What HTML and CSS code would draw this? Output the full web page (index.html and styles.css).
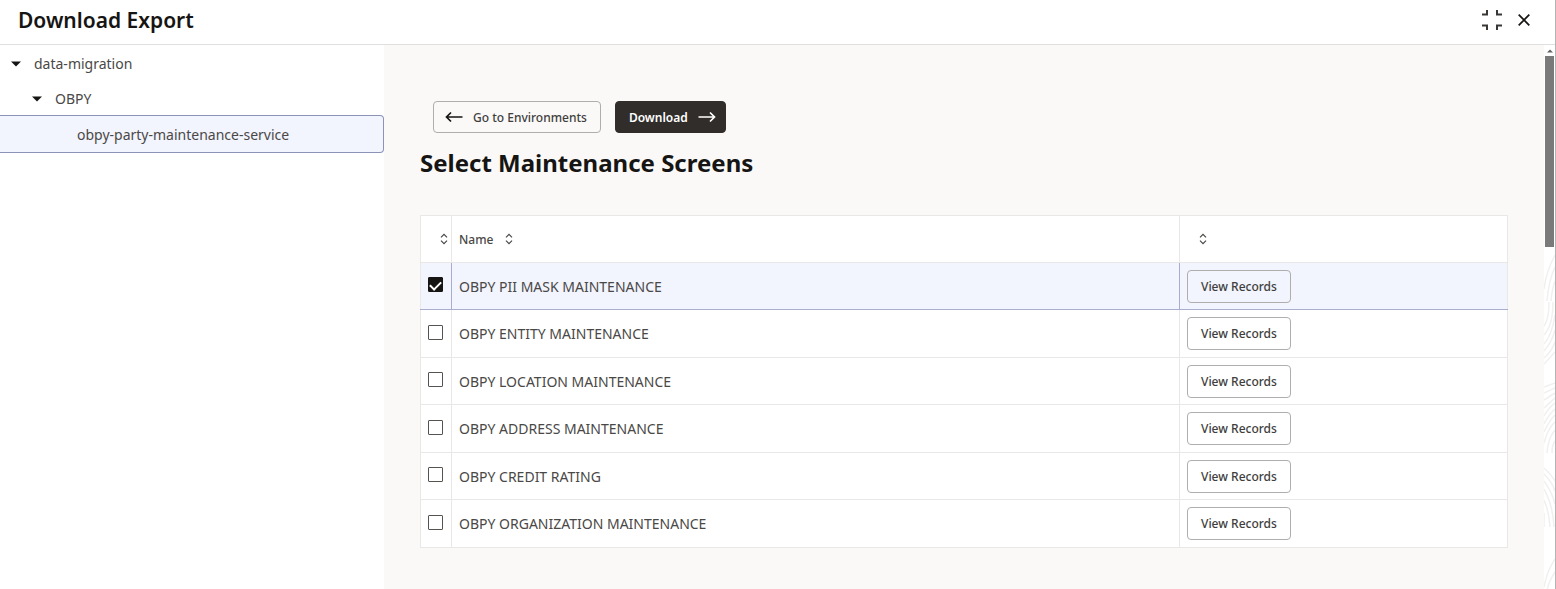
FILE: index.html
```html
<!DOCTYPE html>
<html lang="en">
<head>
<meta charset="utf-8">
<title>Download Export</title>
<link rel="stylesheet" href="styles.css">
</head>
<body>
<svg class="defs" aria-hidden="true">
  <symbol id="sort" viewBox="0 0 8 12"><path d="M1 4.3 4 1.3 7 4.3M1 7.7 4 10.7 7 7.7" fill="none" stroke="currentColor" stroke-width="1.2"/></symbol>
  <symbol id="caret" viewBox="0 0 10 6"><path d="M0 .5H10L5 5.500Z" fill="currentColor"/></symbol>
</svg>
<div class="dialog">
  <header class="topbar">
    <h1 class="title">Download Export</h1>
    <div class="window-tools">
      <button class="icon-button" type="button" aria-label="Collapse">
        <svg width="20" height="20" viewBox="0 0 20 20"><path d="M0 4.500H5V0M15 0V4.500H20M0 15.500H5V20M15 20V15.500H20" fill="none" stroke="#3a3836" stroke-width="2"/></svg>
      </button>
      <button class="icon-button" type="button" aria-label="Close">
        <svg width="12" height="12" viewBox="0 0 12 12"><path d="M.7.7 11.300 11.300M11.300.7.7 11.300" fill="none" stroke="currentColor" stroke-width="1.700"/></svg>
      </button>
    </div>
  </header>
  <div class="body">
    <nav class="tree">
      <button class="node" type="button"><svg class="caret"><use href="#caret"/></svg>data-migration</button>
      <button class="node level-2" type="button"><svg class="caret"><use href="#caret"/></svg>OBPY</button>
      <button class="node level-3 selected" type="button">obpy-party-maintenance-service</button>
    </nav>
    <main class="content">
      <div class="actions">
        <button class="button" type="button"><svg class="arrow" viewBox="0 0 18 12"><path d="M17.500 6H1.500M6 1.500 1.500 6 6 10.500" fill="none" stroke="currentColor" stroke-width="1.700"/></svg>Go to Environments</button>
        <button class="button primary" type="button">Download<svg class="arrow" viewBox="0 0 18 12"><path d="M.5 6H16.500M12 1.500 16.500 6 12 10.500" fill="none" stroke="currentColor" stroke-width="1.700"/></svg></button>
      </div>
      <h2 class="heading">Select Maintenance Screens</h2>
      <table class="grid">
        <colgroup><col class="col-check"><col><col class="col-action"></colgroup>
        <thead>
          <tr>
            <th class="check"><button class="sort" type="button" aria-label="Sort by selection"><svg><use href="#sort"/></svg></button></th>
            <th><button class="sort" type="button">Name<svg><use href="#sort"/></svg></button></th>
            <th class="action-head"><button class="sort" type="button" aria-label="Sort by action"><svg><use href="#sort"/></svg></button></th>
          </tr>
        </thead>
        <tbody>
          <tr class="selected"><td class="check"><input type="checkbox" id="r1" checked></td><td><label for="r1">OBPY PII MASK MAINTENANCE</label></td><td><button class="button" type="button">View Records</button></td></tr>
          <tr><td class="check"><input type="checkbox" id="r2"></td><td><label for="r2">OBPY ENTITY MAINTENANCE</label></td><td><button class="button" type="button">View Records</button></td></tr>
          <tr><td class="check"><input type="checkbox" id="r3"></td><td><label for="r3">OBPY LOCATION MAINTENANCE</label></td><td><button class="button" type="button">View Records</button></td></tr>
          <tr><td class="check"><input type="checkbox" id="r4"></td><td><label for="r4">OBPY ADDRESS MAINTENANCE</label></td><td><button class="button" type="button">View Records</button></td></tr>
          <tr><td class="check"><input type="checkbox" id="r5"></td><td><label for="r5">OBPY CREDIT RATING</label></td><td><button class="button" type="button">View Records</button></td></tr>
          <tr><td class="check"><input type="checkbox" id="r6"></td><td><label for="r6">OBPY ORGANIZATION MAINTENANCE</label></td><td><button class="button" type="button">View Records</button></td></tr>
        </tbody>
      </table>
    </main>
    <div class="scrollbar" aria-hidden="true">
      <svg class="scroll-up" viewBox="0 0 6 4"><path d="M0 3.500 3 .5 6 3.500Z" fill="#606060"/></svg>
      <div class="thumb"></div>
      <svg class="texture" viewBox="0 0 11 343" preserveAspectRatio="xMinYMin slice">
        <g fill="none" stroke="#f1f0ef" stroke-width="1.500">
          <path d="M11 8Q2 25 0 42M11 20Q5 32 3 54M11 34Q8 42 7 54"/>
          <path d="M5 55Q5 73 0 79M9 55Q9 78 0 88M11 68Q8 88 0 97M11 83Q8 95 0 104M11 95Q8 104 0 111M11 105 0 117"/>
          <path d="M0 140 11 136M0 146 11 141M0 153 11 146M0 161 11 151M0 169Q5 160 11 156M0 177Q5 167 11 162M0 185Q5 174 11 168M0 196Q4 181 11 175M3 206Q4 191 11 183M8 206Q8 198 11 194"/>
          <path d="M0 221Q7 227 11 234M0 227Q8 235 11 244M0 234Q8 245 11 257M0 242Q9 258 10 280M0 253Q5 264 6 280M0 266V280"/>
          <path d="M11 312Q3 324 0 340M11 325Q5 334 3 343"/>
        </g>
      </svg>
    </div>
  </div>
</div>
</body>
</html>
```
FILE: styles.css
```css
* { box-sizing: border-box; }

body {
  margin: 0;
  background: #fff;
  color: #161513;
  font-family: "Noto Sans", "Open Sans", sans-serif;
  font-size: 14px;
}

button {
  margin: 0;
  padding: 0;
  border: 0;
  background: none;
  color: inherit;
  font: inherit;
}

svg { display: block; flex: none; }
.defs { display: none; }

.dialog {
  display: flex;
  flex-direction: column;
  min-height: 100vh;
  border-right: 1px solid #b4b4b4;
}

.topbar {
  display: flex;
  align-items: center;
  justify-content: space-between;
  height: 45px;
  padding: 0 25px 4px 18px;
  border-bottom: 1px solid #e1dfdd;
}

.title {
  margin: 0;
  font-size: 21px;
  line-height: 28px;
  font-weight: 600;
}

.window-tools { display: flex; align-items: center; gap: 16px; }

.body { display: flex; flex: 1; }

.tree {
  display: flex;
  flex-direction: column;
  flex: none;
  width: 384px;
}

.node {
  display: flex;
  align-items: center;
  gap: 13px;
  height: 35px;
  padding: 2px 11px 0;
  color: #4a4846;
  line-height: 20px;
  text-align: left;
}

.node.level-2 { padding-left: 32px; }
.node.level-3 { padding-left: 77px; }

.node.selected {
  height: 38px;
  border: 1px solid #8b93b8;
  border-left: 0;
  border-radius: 0 4px 4px 0;
  background: #f2f4fe;
}

.caret { width: 10px; height: 6px; color: #161513; }

.content {
  flex: 1;
  min-width: 0;
  padding: 56px 36px 40px;
  background: #faf9f8;
}

.actions { display: flex; gap: 14px; padding-left: 13px; }

.button {
  display: inline-flex;
  align-items: center;
  height: 33px;
  padding: 0 13px;
  border: 1px solid #b0aeac;
  border-radius: 4px;
  font-size: 12px;
  font-weight: 500;
  color: #403e3c;
}

.actions .button { gap: 10px; height: 32px; padding: 0 13px 0 11px; }

.actions .button.primary {
  padding: 0 9px 0 13px;
  border-color: #312d2a;
  background: #312d2a;
  color: #fff;
  font-weight: 600;
}

.arrow { width: 18px; height: 12px; }
.button:not(.primary) .arrow { color: #161513; }

.heading {
  margin: 12px 0 34px;
  font-size: 24px;
  line-height: 36px;
  font-weight: 700;
}

.grid {
  width: 100%;
  table-layout: fixed;
  border-collapse: collapse;
  border: 1px solid #e9e8e6;
  background: #fff;
}

.col-check { width: 31px; }
.col-action { width: 328px; }

.grid th,
.grid td {
  height: 47px;
  padding: 0 7px;
  border: 1px solid #e9e8e6;
  text-align: left;
  vertical-align: middle;
  color: #4a4846;
}

.grid tr:nth-child(2n) td { height: 48px; }

.grid .check { padding: 0 3px 0 7px; }
.grid .action-head { padding-left: 19px; }
.check .sort { margin-left: auto; }

.grid .selected td {
  border-bottom-color: #a9aed0;
  background: #f2f4fe;
}

.grid .selected td:not(:last-child) { border-right-color: #a9aed0; }

.sort {
  display: flex;
  align-items: center;
  gap: 12px;
  font-size: 12px;
  font-weight: 500;
}

.sort svg { width: 8px; height: 12px; }

.grid input {
  display: flex;
  justify-content: center;
  appearance: none;
  width: 15px;
  height: 15px;
  margin: 0 0 3px;
  border: 1px solid #55524f;
  border-radius: 1px;
  background: #fff;
}

.grid input:checked {
  border-color: #161513;
  background: #161513;
}

.grid input:checked::after {
  content: "";
  width: 9px;
  height: 5px;
  margin-top: 3px;
  border: solid #fff;
  border-width: 0 0 2px 2px;
  transform: rotate(-45deg);
}

.scrollbar {
  display: flex;
  flex-direction: column;
  flex: none;
  width: 11px;
  background: #fff;
}

.scroll-up { width: 6px; height: 4px; margin: 4px 3px 3px; }
.thumb { height: 191px; margin: 0 1px; background: #7a7a7a; }
.texture { width: 11px; flex: 1; min-height: 0; }
```
